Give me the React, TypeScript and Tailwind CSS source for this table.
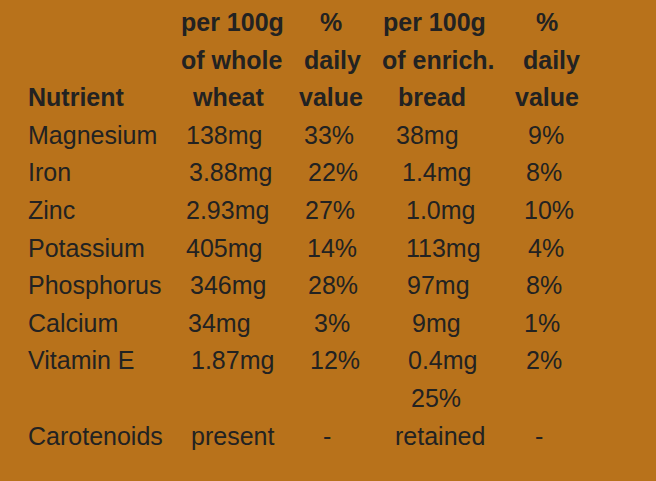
import React from "react";

type Cell = { text: string; pad: string };

// header lines (bold), each cell has its own little left offset like the source page
const headerRows: Cell[][] = [
  [
    { text: "", pad: "" },
    { text: "per 100g", pad: "pl-0" },
    { text: "%", pad: "pl-[21px]" },
    { text: "per 100g", pad: "pl-[2px]" },
    { text: "%", pad: "pl-[21px]" },
  ],
  [
    { text: "", pad: "" },
    { text: "of whole", pad: "pl-0" },
    { text: "daily", pad: "pl-[5px]" },
    { text: "of enrich.", pad: "pl-[1px]" },
    { text: "daily", pad: "pl-[8px]" },
  ],
  [
    { text: "Nutrient", pad: "pl-0" },
    { text: "wheat", pad: "pl-[12px]" },
    { text: "value", pad: "pl-0" },
    { text: "bread", pad: "pl-[17px]" },
    { text: "value", pad: "pl-0" },
  ],
];

const rows: Cell[][] = [
  [
    { text: "Magnesium", pad: "pl-0" },
    { text: "138mg", pad: "pl-[5px]" },
    { text: "33%", pad: "pl-[5px]" },
    { text: "38mg", pad: "pl-[15px]" },
    { text: "9%", pad: "pl-[13px]" },
  ],
  [
    { text: "Iron", pad: "pl-0" },
    { text: "3.88mg", pad: "pl-[8px]" },
    { text: "22%", pad: "pl-[9px]" },
    { text: "1.4mg", pad: "pl-[21px]" },
    { text: "8%", pad: "pl-[11px]" },
  ],
  [
    { text: "Zinc", pad: "pl-0" },
    { text: "2.93mg", pad: "pl-[5px]" },
    { text: "27%", pad: "pl-[6px]" },
    { text: "1.0mg", pad: "pl-[25px]" },
    { text: "10%", pad: "pl-[9px]" },
  ],
  [
    { text: "Potassium", pad: "pl-0" },
    { text: "405mg", pad: "pl-[5px]" },
    { text: "14%", pad: "pl-[8px]" },
    { text: "113mg", pad: "pl-[25px]" },
    { text: "4%", pad: "pl-[13px]" },
  ],
  [
    { text: "Phosphorus", pad: "pl-0" },
    { text: "346mg", pad: "pl-[9px]" },
    { text: "28%", pad: "pl-[9px]" },
    { text: "97mg", pad: "pl-[26px]" },
    { text: "8%", pad: "pl-[11px]" },
  ],
  [
    { text: "Calcium", pad: "pl-0" },
    { text: "34mg", pad: "pl-[7px]" },
    { text: "3%", pad: "pl-[15px]" },
    { text: "9mg", pad: "pl-[31px]" },
    { text: "1%", pad: "pl-[9px]" },
  ],
  [
    { text: "Vitamin E", pad: "pl-0" },
    { text: "1.87mg", pad: "pl-[10px]" },
    { text: "12%", pad: "pl-[11px]" },
    { text: "0.4mg", pad: "pl-[27px]" },
    { text: "2%", pad: "pl-[11px]" },
  ],
  [
    { text: "", pad: "" },
    { text: "", pad: "" },
    { text: "", pad: "" },
    { text: "25%", pad: "pl-[30px]" },
    { text: "", pad: "" },
  ],
  [
    { text: "Carotenoids", pad: "pl-0" },
    { text: "present", pad: "pl-[10px]" },
    { text: "-", pad: "pl-[24px]" },
    { text: "retained", pad: "pl-[14px]" },
    { text: "-", pad: "pl-[20px]" },
  ],
];

function Row({ cells, bold }: { cells: Cell[]; bold?: boolean }) {
  return (
    <div
      className={`grid grid-cols-[153px_118px_82px_134px_1fr] ${
        bold ? "font-bold" : "font-normal"
      }`}
    >
      {cells.map((c, i) => (
        <div key={i} className={`whitespace-nowrap ${c.pad}`}>
          {c.text || "\u00a0"}
        </div>
      ))}
    </div>
  );
}

export default function App() {
  return (
    <div className="w-[656px] h-[481px] bg-[#b8721b] text-[#222222] font-['Liberation_Sans',Arial,sans-serif] text-[25px] leading-[37.6px] pl-[28px] pt-[4px] overflow-hidden">
      {headerRows.map((r, i) => (
        <Row key={`h${i}`} cells={r} bold />
      ))}
      {rows.map((r, i) => (
        <Row key={i} cells={r} />
      ))}
    </div>
  );
}
